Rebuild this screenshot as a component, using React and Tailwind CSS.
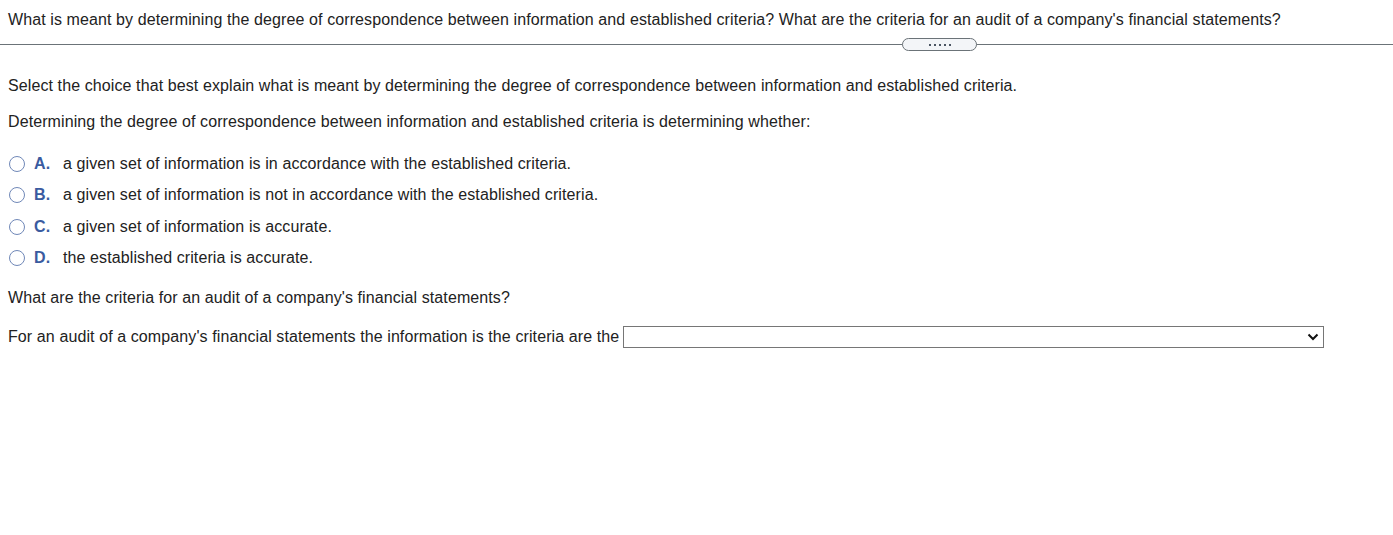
export default function App() {
  const options = [
    ['A.', 'a given set of information is in accordance with the established criteria.'],
    ['B.', 'a given set of information is not in accordance with the established criteria.'],
    ['C.', 'a given set of information is accurate.'],
    ['D.', 'the established criteria is accurate.'],
  ]
  return (
    <div className="w-[1393px] h-[535px] bg-white text-[#222] text-[16px] tracking-[0.1px] font-['Liberation_Sans',Arial,sans-serif]">
      <div className="px-2 pt-[10px] h-[44px] leading-[20px]">
        What is meant by determining the degree of correspondence between information and established criteria? What are the criteria for an audit of a company's financial statements?
      </div>
      <div className="relative h-px bg-[#6b7378]">
        <div className="absolute left-[902px] -top-[6px] w-[75px] h-[13px] rounded-full border border-[#6b7378] bg-[#f3f5f8] flex items-center justify-center gap-[3px]">
          {[0, 1, 2, 3, 4].map((i) => (
            <span key={i} className="w-[2px] h-[2px] bg-[#4b5563]" />
          ))}
        </div>
      </div>
      <div className="px-2 pt-[31px] leading-[20px]">
        <p>Select the choice that best explain what is meant by determining the degree of correspondence between information and established criteria.</p>
        <p className="mt-[16px]">Determining the degree of correspondence between information and established criteria is determining whether:</p>
        <div className="mt-[22px] flex flex-col gap-[11.4px]">
          {options.map(([l, t]) => (
            <div key={l} className="flex items-center h-[20px]">
              <span className="w-[16px] h-[16px] rounded-full border-[1.5px] border-[#7088b8] mr-[9px] ml-[1px]" />
              <span className="font-bold text-[#3a5ba0] w-[29px]">{l}</span>
              <span>{t}</span>
            </div>
          ))}
        </div>
        <p className="mt-[20px]">What are the criteria for an audit of a company's financial statements?</p>
        <div className="mt-[18px] flex items-center">
          <span>For an audit of a company's financial statements the information is the criteria are the</span>
          <div className="ml-[4px] w-[701px] h-[22px] border border-[#767676] flex items-center justify-end pr-[4px]">
            <svg width="12" height="8" viewBox="0 0 12 8" fill="none" stroke="#111" strokeWidth="2"><path d="M1.5 1.5l4.5 4.5 4.5-4.5" /></svg>
          </div>
        </div>
      </div>
    </div>
  )
}
